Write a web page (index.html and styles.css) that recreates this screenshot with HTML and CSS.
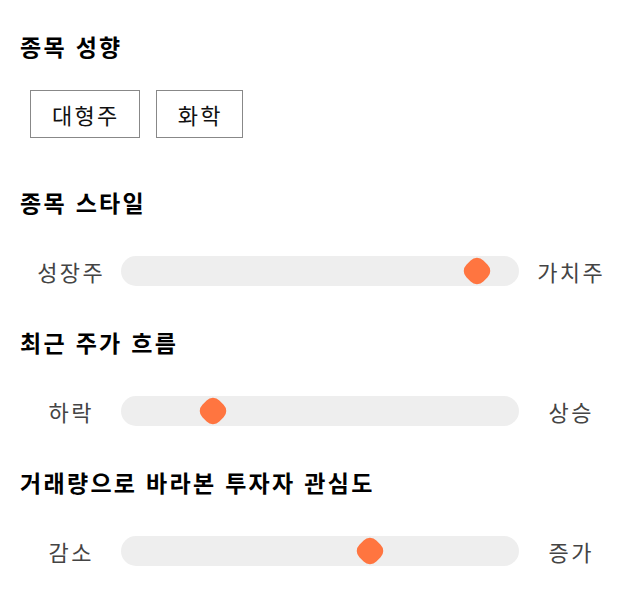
FILE: index.html
```html
<!DOCTYPE html>
<html lang="ko">
<head>
<meta charset="utf-8">
<link rel="stylesheet" href="styles.css">
</head>
<body>
<div class="page">
  <section class="block block-tags">
    <h2 class="title">종목 성향</h2>
    <div class="tags">
      <span class="tag">대형주</span>
      <span class="tag">화학</span>
    </div>
  </section>
  <section class="block">
    <h2 class="title">종목 스타일</h2>
    <div class="scale">
      <span class="label">성장주</span>
      <div class="track"><span class="thumb" style="left: 89.5%"></span></div>
      <span class="label">가치주</span>
    </div>
  </section>
  <section class="block">
    <h2 class="title">최근 주가 흐름</h2>
    <div class="scale">
      <span class="label">하락</span>
      <div class="track"><span class="thumb" style="left: 23.1%"></span></div>
      <span class="label">상승</span>
    </div>
  </section>
  <section class="block">
    <h2 class="title">거래량으로 바라본 투자자 관심도</h2>
    <div class="scale">
      <span class="label">감소</span>
      <div class="track"><span class="thumb" style="left: 62.6%"></span></div>
      <span class="label">증가</span>
    </div>
  </section>
</div>
</body>
</html>
```

FILE: styles.css
```css
* { box-sizing: border-box; }
html, body { margin: 0; padding: 0; background: #fff; }
body {
  font-family: "Noto Sans CJK KR", "Noto Sans", sans-serif;
  color: #000;
}
.page {
  padding: 30px 20px 0 20px;
  display: flex;
  flex-direction: column;
}
.block { display: flex; flex-direction: column; margin-bottom: 40px; }
.block-tags { margin-bottom: 48px; }
.title {
  margin: 0;
  font-size: 23px;
  font-weight: 700;
  line-height: 32px;
  height: 32px;
  letter-spacing: 2.3px;
  color: #000;
}
.tags {
  display: flex;
  gap: 16px;
  margin-top: 28px;
  padding-left: 10px;
}
.tag {
  display: flex;
  align-items: center;
  justify-content: center;
  height: 48px;
  padding: 0 19px 0 21px;
  border: 1px solid #888;
  font-size: 22px;
  letter-spacing: 2.3px;
  color: #111;
}
.scale {
  display: flex;
  align-items: center;
  margin-top: 38px;
  height: 30px;
}
.label {
  width: 100px;
  flex: none;
  text-align: center;
  font-size: 22px;
  letter-spacing: 2.3px;
  text-indent: 2.3px;
  color: #444;
}
.track {
  position: relative;
  flex: 1;
  height: 30px;
  margin: 0 1px;
  border-radius: 15px;
  background: #eee;
}
.thumb {
  position: absolute;
  top: 3px;
  width: 24px;
  height: 24px;
  margin-left: -12px;
  background: #ff7540;
  border-radius: 9px;
  transform: rotate(45deg);
}
```
